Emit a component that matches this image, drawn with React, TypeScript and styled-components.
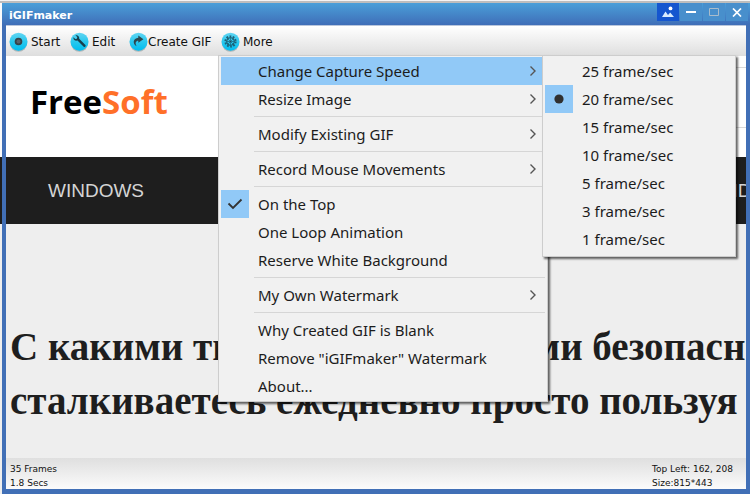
import React from "react";
import styled, { createGlobalStyle, css } from "styled-components";

const GlobalStyle = createGlobalStyle`
  *, *::before, *::after { box-sizing: border-box; }
  body { margin: 0; font-family: "DejaVu Sans", Verdana, sans-serif; color: #111; }
  button { font: inherit; color: inherit; background: none; border: 0; margin: 0; padding: 0; text-align: left; }
  ul { list-style: none; margin: 0; padding: 0; }
`;

const Desktop = styled.div`
  display: flex;
  min-height: 100vh;
  padding: 3px 0 0 2px;
  overflow: hidden;
  background: linear-gradient(
    #f4f4f4 0 1px, #bdbdbd 1px 3px, #fbfbfb 3px 157px, #1e1e1e 157px 224px, #eeeeee 224px
  );
`;

const Window = styled.main`
  flex: 1;
  min-width: 0;
  display: flex;
  flex-direction: column;
  background: #416fb6;
`;

const TitleBar = styled.header`
  display: flex;
  justify-content: space-between;
  height: 22px;
  padding: 0 2px 0 7px;
  background: linear-gradient(#4a9fd9, #3f6eb8);
`;

const Title = styled.h1`
  margin: 0;
  font-size: 11px;
  line-height: 26px;
  font-weight: bold;
  color: #fff;
`;

const Captions = styled.div`
  display: flex;
  gap: 1px;
  height: 18px;
`;

const CaptionButton = styled.button<{ $active?: boolean }>`
  display: grid;
  place-items: center;
  width: 22px;
  background: ${(p) => (p.$active ? "#1556cf" : "#488fcc")};
`;

const Frame = styled.div`
  flex: 1;
  display: flex;
  flex-direction: column;
  margin: 0 4px 5px;
  min-width: 0;
  background: #eee;
`;

const Toolbar = styled.nav`
  display: flex;
  height: 31px;
  padding: 0 3px;
  border-top: 1px solid #b9c6dc;
  background: linear-gradient(#ffffff, #dedede);
`;

const ToolSlot = styled.div<{ $width: number }>`
  position: relative;
  width: ${(p) => p.$width}px;
`;

const ToolButton = styled.button<{ $gap: number }>`
  display: flex;
  align-items: center;
  gap: ${(p) => p.$gap}px;
  height: 31px;
  font-size: 12px;
  line-height: 16px;
  white-space: nowrap;
  svg { flex: none; }
`;

const menuPanel = css`
  position: absolute;
  z-index: 2;
  padding: 1px 2px;
  border: 1px solid #cdcdcd;
  background: #f1f1f1;
  box-shadow: 2px 2px 2px rgba(0, 0, 0, 0.6);
`;

const MoreMenu = styled.ul`
  ${menuPanel}
  top: 29px;
  left: -3px;
  width: 330px;
`;

const SpeedMenu = styled.ul`
  ${menuPanel}
  top: -2px;
  left: 321px;
  width: 194px;
  padding-bottom: 3px;
`;

const MenuRow = styled.li`
  position: relative;
`;

const MenuButton = styled.button<{ $active?: boolean }>`
  display: grid;
  grid-template-columns: 28px 1fr 16px;
  column-gap: 9px;
  align-items: center;
  width: 100%;
  height: 28px;
  padding-right: 5px;
  font-family: "Noto Sans", "Open Sans", sans-serif;
  font-size: 15px;
  line-height: 28px;
  white-space: nowrap;
  color: #1c1c1c;
  background: ${(p) => (p.$active ? "#91c9f7" : "transparent")};
`;

const Mark = styled.span<{ $on?: boolean }>`
  display: grid;
  place-items: center;
  height: 28px;
  background: ${(p) => (p.$on ? "#91c9f7" : "transparent")};
`;

const Separator = styled.li`
  height: 7px;
  margin-left: 33px;
  border-bottom: 3px solid transparent;
  background: linear-gradient(transparent 3px, #d6d6d6 3px);
  background-clip: padding-box;
`;

const Capture = styled.section`
  flex: 1;
  display: flex;
  flex-direction: column;
  overflow: hidden;
`;

const SiteHeader = styled.div`
  display: flex;
  align-items: flex-start;
  justify-content: space-between;
  height: 101px;
  padding-left: 24px;
  background: #fff;
`;

const Logo = styled.div`
  padding-top: 23px;
  font-family: "Open Sans", sans-serif;
  font-weight: bold;
  font-size: 33px;
  line-height: 46px;
  color: #000;
  span { color: #ff7029; }
`;

const SearchFrame = styled.div`
  width: 200px;
  height: 61px;
  margin-top: 11px;
  border: 1px solid #d9d9d9;
  border-right: 0;
`;

const SiteNav = styled.div`
  display: flex;
  justify-content: space-between;
  height: 67px;
  padding-left: 42px;
  margin-right: -53px;
  font-family: "Liberation Sans", Arial, sans-serif;
  font-size: 19px;
  line-height: 67px;
  background: #1e1e1e;
  a { color: #d4d4d4; text-decoration: none; }
`;

const Headline = styled.h2`
  margin: 96px 0 0;
  padding-left: 4px;
  font-family: "Liberation Serif", "Times New Roman", serif;
  font-weight: bold;
  font-size: 39px;
  line-height: 54px;
  white-space: nowrap;
  color: #1e1e1e;
`;

const StatusBar = styled.footer`
  display: flex;
  justify-content: space-between;
  height: 31px;
  padding: 4px 13px 0 4px;
  font-size: 9px;
  line-height: 14px;
  background: linear-gradient(#dfdfdf, #fbfbfb);
  p { margin: 0; }
`;

const Orb = ({ children }: { children: React.ReactNode }) => (
  <svg width="19" height="20" viewBox="0 0 19 20" aria-hidden="true">
    <defs>
      <linearGradient id="orb" x1="0" y1="0" x2="0" y2="1">
        <stop offset="0" stopColor="#62d5f2" />
        <stop offset="0.5" stopColor="#29c8ee" />
        <stop offset="1" stopColor="#00bdf0" />
      </linearGradient>
    </defs>
    <ellipse cx="9.5" cy="11" rx="8.7" ry="8.7" fill="#8b979b" opacity="0.6" />
    <circle cx="9.5" cy="9.7" r="9" fill="url(#orb)" />
    {children}
  </svg>
);

const StartIcon = () => (
  <Orb>
    <circle cx="9.5" cy="9.5" r="3.8" fill="#35444b" />
    <circle cx="9.5" cy="9.5" r="2" fill="#59636a" />
  </Orb>
);

const EditIcon = () => (
  <Orb>
    <path
      d="M3.4 5.3 5.3 7.1 6.9 6.7 7.3 5 5.5 3.4C7.4 2.8 9.6 4.2 9.2 6.8L15.4 13.1C16.3 14.2 14.9 15.7 13.7 14.8L7.5 8.6C5.1 9.3 2.9 7.5 3.4 5.3Z"
      fill="#173f4d"
    />
  </Orb>
);

const CreateIcon = () => (
  <Orb>
    <path d="M7.6 14.2C3.2 11.8 4 6.1 9.3 5.7V3.6L14.4 7.3 9.3 10.8V8.8C6.8 8.8 5.8 11.2 7.6 14.2Z" fill="#2b464e" />
  </Orb>
);

const MoreIcon = () => (
  <Orb>
    <circle cx="9.5" cy="9.5" r="5.2" fill="none" stroke="#1d6076" strokeWidth="1.8" strokeDasharray="1.8 1.47" />
    <circle cx="9.5" cy="9.5" r="3.9" fill="none" stroke="#174c5e" strokeWidth="1" />
    <path d="M9.5 6v7M6 9.5h7M7 7l5 5M12 7l-5 5" stroke="#174c5e" strokeWidth="0.6" />
  </Orb>
);

const Chevron = () => (
  <svg width="16" height="12" viewBox="0 0 16 12" aria-hidden="true">
    <path d="M6.5 1.5 11 6 6.5 10.5" fill="none" stroke="#555" strokeWidth="1.4" />
  </svg>
);

const Check = () => (
  <svg width="16" height="12" viewBox="0 0 16 12" aria-hidden="true">
    <path d="M1.5 5.5 6 10 14.5 1.5" fill="none" stroke="#333" strokeWidth="1.8" />
  </svg>
);

const Dot = () => (
  <svg width="10" height="10" viewBox="0 0 10 10" aria-hidden="true">
    <circle cx="5" cy="5" r="4.6" fill="#303030" />
  </svg>
);

type Entry = { label: string; submenu?: boolean; checked?: boolean; active?: boolean };

const groups: Entry[][] = [
  [
    { label: "Change Capture Speed", submenu: true, active: true },
    { label: "Resize Image", submenu: true },
  ],
  [{ label: "Modify Existing GIF", submenu: true }],
  [{ label: "Record Mouse Movements", submenu: true }],
  [{ label: "On the Top", checked: true }, { label: "One Loop Animation" }, { label: "Reserve White Background" }],
  [{ label: "My Own Watermark", submenu: true }],
  [{ label: "Why Created GIF is Blank" }, { label: 'Remove "iGIFmaker" Watermark' }, { label: "About..." }],
];

const speeds = [25, 20, 15, 10, 5, 3, 1];
const currentSpeed = 20;

export default function App() {
  return (
    <>
      <GlobalStyle />
      <Desktop>
        <Window>
          <TitleBar>
            <Title>iGIFmaker</Title>
            <Captions>
              <CaptionButton $active aria-label="Gallery">
                <svg width="14" height="12" viewBox="0 0 14 12">
                  <path d="M1 11 4.5 5.5 7 9 9.2 6.5 13 11Z" fill="#d9ecff" />
                  <circle cx="9.5" cy="2.4" r="1.9" fill="#fff" />
                </svg>
              </CaptionButton>
              <CaptionButton aria-label="Minimize">
                <svg width="10" height="10" viewBox="0 0 10 10">
                  <path d="M0 5h10" stroke="#fff" strokeWidth="2" />
                </svg>
              </CaptionButton>
              <CaptionButton aria-label="Maximize">
                <svg width="10" height="8" viewBox="0 0 10 8">
                  <path d="M.5.5h9v7h-9Z" fill="none" stroke="#a9bccb" />
                </svg>
              </CaptionButton>
              <CaptionButton aria-label="Close">
                <svg width="10" height="9" viewBox="0 0 10 9">
                  <path d="M1 .5 9 8.5M9 .5 1 8.5" stroke="#fff" strokeWidth="1.7" />
                </svg>
              </CaptionButton>
            </Captions>
          </TitleBar>
          <Frame>
            <Toolbar>
              <ToolSlot $width={61}>
                <ToolButton $gap={3}><StartIcon />Start</ToolButton>
              </ToolSlot>
              <ToolSlot $width={59}>
                <ToolButton $gap={3}><EditIcon />Edit</ToolButton>
              </ToolSlot>
              <ToolSlot $width={92}>
                <ToolButton $gap={0}><CreateIcon />Create GIF</ToolButton>
              </ToolSlot>
              <ToolSlot $width={60}>
                <ToolButton $gap={3} aria-haspopup="menu" aria-expanded="true"><MoreIcon />More</ToolButton>
                <MoreMenu role="menu">
                  {groups.map((group, g) => (
                    <React.Fragment key={g}>
                      {g > 0 && <Separator role="separator" />}
                      {group.map((item) => (
                        <MenuRow key={item.label} role="none">
                          <MenuButton role="menuitem" $active={item.active}>
                            <Mark $on={item.checked}>{item.checked && <Check />}</Mark>
                            {item.label}
                            {item.submenu && <Chevron />}
                          </MenuButton>
                          {item.active && (
                            <SpeedMenu role="menu">
                              {speeds.map((speed) => (
                                <MenuRow key={speed} role="none">
                                  <MenuButton role="menuitemradio" aria-checked={speed === currentSpeed}>
                                    <Mark $on={speed === currentSpeed}>{speed === currentSpeed && <Dot />}</Mark>
                                    {`${speed} frame/sec`}
                                  </MenuButton>
                                </MenuRow>
                              ))}
                            </SpeedMenu>
                          )}
                        </MenuRow>
                      ))}
                    </React.Fragment>
                  ))}
                </MoreMenu>
              </ToolSlot>
            </Toolbar>
            <Capture>
              <SiteHeader>
                <Logo>Free<span>Soft</span></Logo>
                <SearchFrame />
              </SiteHeader>
              <SiteNav>
                <a href="#windows">WINDOWS</a>
                <a href="#android">ANDROID</a>
              </SiteNav>
              <Headline>
                С какими типичными вирусами безопасн
                <br />
                сталкиваетесь ежедневно просто пользуя
              </Headline>
            </Capture>
            <StatusBar>
              <div>
                <p>35 Frames</p>
                <p>1.8 Secs</p>
              </div>
              <div>
                <p>Top Left: 162, 208</p>
                <p>Size:815*443</p>
              </div>
            </StatusBar>
          </Frame>
        </Window>
      </Desktop>
    </>
  );
}
